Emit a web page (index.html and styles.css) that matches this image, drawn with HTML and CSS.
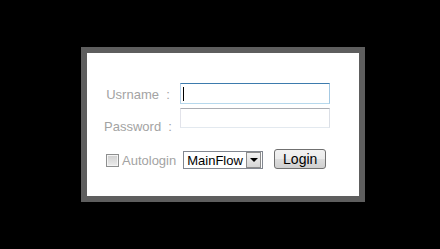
FILE: index.html
```html
<!DOCTYPE html>
<html lang="en">
<head>
  <meta charset="UTF-8">
  <title>Login</title>
  <link rel="stylesheet" href="styles.css">
</head>
<body>
  <form class="login-box" action="login.php" method="post">
    <div class="field-row">
      <label class="field-label">Usrname &nbsp;:</label>
      <span class="text-wrap">
        <input type="text" name="username" class="text-input is-focused">
        <span class="caret"></span>
      </span>
    </div>

    <div class="field-row">
      <label class="field-label field-label-low">Password &nbsp;:</label>
      <input type="password" name="password" class="text-input">
    </div>

    <div class="action-row">
      <label class="autologin"><span class="check"></span>Autologin</label>
      <span class="select-wrap">
        <select name="flow" class="flow-select">
          <option>MainFlow</option>
        </select>
        <span class="select-arrow"></span>
      </span>
      <button type="submit" class="login-btn">Login</button>
    </div>
  </form>
</body>
</html>
```

FILE: styles.css
```css
body {
  margin: 0;
  background: #000;
  font-family: "Liberation Sans", Arial, sans-serif;
  font-size: 13px;
}

.login-box {
  box-sizing: border-box;
  width: 284px;
  height: 155px;
  margin: 47px 0 0 81px;
  padding-top: 30px;
  border: 6px solid #5e5e5e;
  background: #fff;
}

.field-row {
  display: flex;
  align-items: flex-start;
  padding-left: 9px;
}

.field-row + .field-row {
  margin-top: 4px;
}

.field-label {
  width: 84px;
  margin-top: 4px;
  line-height: 15px;
  text-align: center;
  color: #a3a3a3;
}

.field-label-low {
  margin-top: 11px;
}

.text-wrap {
  position: relative;
  display: block;
}

.text-input {
  display: block;
  box-sizing: border-box;
  width: 150px;
  height: 20px;
  margin: 0;
  padding: 0 3px;
  border: 1px solid;
  border-color: #abadb3 #dbdfe6 #e3e9ef #e2e3ea;
  background: #fff;
  font: inherit;
  outline: none;
}

.text-input.is-focused {
  height: 21px;
  border-color: #3d7bad #a4c9e3 #b7d9ed #b5cfe7;
}

.caret {
  position: absolute;
  left: 3px;
  top: 4px;
  width: 1px;
  height: 14px;
  background: #000;
}

.action-row {
  display: flex;
  align-items: flex-start;
  margin-top: 15px;
  padding-left: 19px;
}

.autologin {
  display: flex;
  align-items: center;
  gap: 3px;
  margin-top: 4px;
  line-height: 15px;
  color: #a3a3a3;
}

.check {
  box-sizing: border-box;
  width: 13px;
  height: 13px;
  border: 1px solid #8e8f8f;
  box-shadow: inset 0 0 0 1px #f4f4f4;
  background: linear-gradient(#cfcfcf, #ececec);
}

.select-wrap {
  position: relative;
  display: block;
  margin: 2px 0 0 7px;
}

.flow-select {
  display: block;
  box-sizing: border-box;
  width: 80px;
  height: 18px;
  margin: 0;
  padding: 0 0 0 3px;
  border: 1px solid #828790;
  border-radius: 0;
  background: #fff;
  color: #000;
  font: inherit;
  -webkit-appearance: none;
  appearance: none;
}

.select-arrow {
  position: absolute;
  right: 2px;
  top: 1px;
  box-sizing: border-box;
  width: 15px;
  height: 16px;
  border: 1px solid #8c8c8c;
  background: linear-gradient(#f2f2f2, #d6d6d6);
}

.select-arrow::after {
  content: "";
  position: absolute;
  left: 3px;
  top: 5px;
  border-left: 4px solid transparent;
  border-right: 4px solid transparent;
  border-top: 4px solid #000;
}

.login-btn {
  box-sizing: border-box;
  width: 52px;
  height: 20px;
  margin-left: 11px;
  padding: 0;
  border: 1px solid #707070;
  border-radius: 3px;
  background: linear-gradient(#f2f2f2 0%, #ebebeb 50%, #dddddd 51%, #cfcfcf 100%);
  color: #000;
  font: inherit;
  font-size: 14px;
  cursor: pointer;
}
```
